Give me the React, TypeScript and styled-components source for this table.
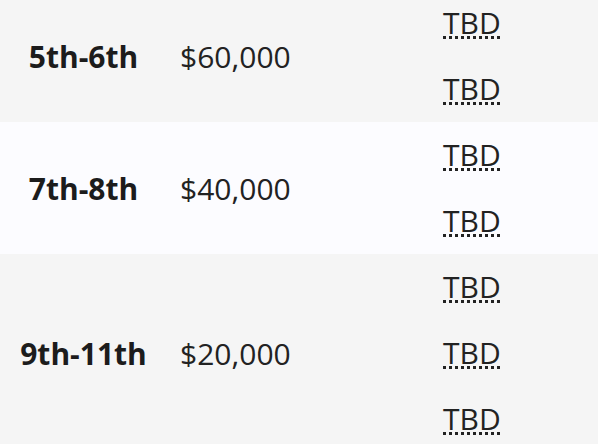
import React from "react";
import styled, { createGlobalStyle } from "styled-components";

const Global = createGlobalStyle`
  html, body { margin: 0; padding: 0; background: #ffffff; overflow: hidden; }
  body { font-family: "Open Sans", "Liberation Sans", sans-serif; color: #222222; }
`;

const Table = styled.div`
  display: flex;
  flex-direction: column;
  margin-top: -10px;
  width: 598px;
`;

const Row = styled.div<{ $shade: boolean }>`
  display: grid;
  grid-template-columns: 167px 276px 1fr;
  align-items: center;
  background: ${(p) => (p.$shade ? "#f5f5f5" : "#fcfcff")};
`;

const Grade = styled.div`
  text-align: center;
  font-weight: 700;
  font-size: 30px;
  line-height: 41px;
  color: #1c1c1c;
`;

const Prize = styled.div`
  padding-left: 13px;
  font-size: 30px;
  line-height: 41px;
  color: #222222;
`;

const Sponsors = styled.div`
  display: flex;
  flex-direction: column;
`;

const Slot = styled.div`
  height: 66px;
  line-height: 66px;
  font-size: 30px;
`;

const Abbr = styled.abbr`
  color: #222222;
  text-decoration: underline dotted;
  text-decoration-thickness: 3px;
  text-underline-offset: 2px;
  cursor: help;
`;

const rows = [
  { grade: "5th-6th", prize: "$60,000", count: 2 },
  { grade: "7th-8th", prize: "$40,000", count: 2 },
  { grade: "9th-11th", prize: "$20,000", count: 3 },
];

export default function App() {
  return (
    <>
      <Global />
      <Table>
        {rows.map((r, i) => (
          <Row key={r.grade} $shade={i % 2 === 0}>
            <Grade>{r.grade}</Grade>
            <Prize>{r.prize}</Prize>
            <Sponsors>
              {Array.from({ length: r.count }).map((_, j) => (
                <Slot key={j}>
                  <Abbr title="To be determined">TBD</Abbr>
                </Slot>
              ))}
            </Sponsors>
          </Row>
        ))}
      </Table>
    </>
  );
}
